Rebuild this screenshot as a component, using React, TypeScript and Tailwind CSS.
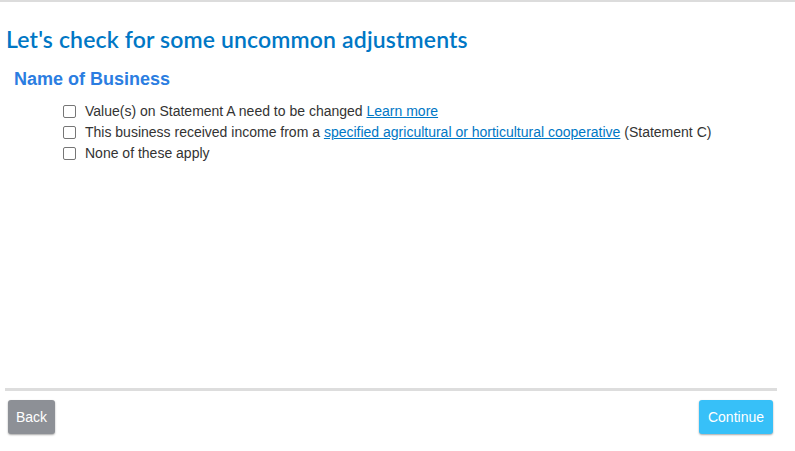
export default function App() {
  const items = [
    <>
      Value(s) on Statement A need to be changed{" "}
      <a href="#" className="text-[#0077c5] underline">Learn more</a>
    </>,
    <>
      This business received income from a{" "}
      <a href="#" className="text-[#0077c5] underline">
        specified agricultural or horticultural cooperative
      </a>{" "}
      (Statement C)
    </>,
    <>None of these apply</>,
  ];

  return (
    <div className="w-[795px] h-[451px] bg-white flex flex-col border-t-2 border-[#dcdcdc] font-['Liberation_Sans',Arial,sans-serif]">
      <h1 className="ml-[6px] mt-[23px] text-[23px] leading-[28px] tracking-[0.15px] font-semibold text-[#0077c5] font-['Lato',sans-serif]">
        Let's check for some uncommon adjustments
      </h1>
      <h2 className="ml-[14px] mt-[15px] text-[18px] leading-[22px] font-bold text-[#2b7de1]">
        Name of Business
      </h2>
      <div className="ml-[63px] mt-[11px] flex flex-col">
        {items.map((content, i) => (
          <label key={i} className="flex items-center h-[21px] text-[14px] text-[#333]">
            <span className="w-[13px] h-[13px] border border-[#767676] rounded-[2px] bg-white mr-[9px] shrink-0" />
            <span>{content}</span>
          </label>
        ))}
      </div>
      <div className="flex-1" />
      <div className="mx-[5px] w-[772px] h-[3px] bg-[#dddddd]" />
      <div className="flex justify-between pl-[8px] pr-[22px] pt-[9px] pb-[17px]">
        <button className="h-[34px] px-[8px] rounded-[3px] bg-[#8d9096] text-white text-[14px] shadow-[0_1px_2px_rgba(0,0,0,0.35)]">
          Back
        </button>
        <button className="h-[34px] px-[9px] rounded-[3px] bg-[#37c0f8] text-white text-[14px] shadow-[0_1px_2px_rgba(0,0,0,0.35)]">
          Continue
        </button>
      </div>
    </div>
  );
}
